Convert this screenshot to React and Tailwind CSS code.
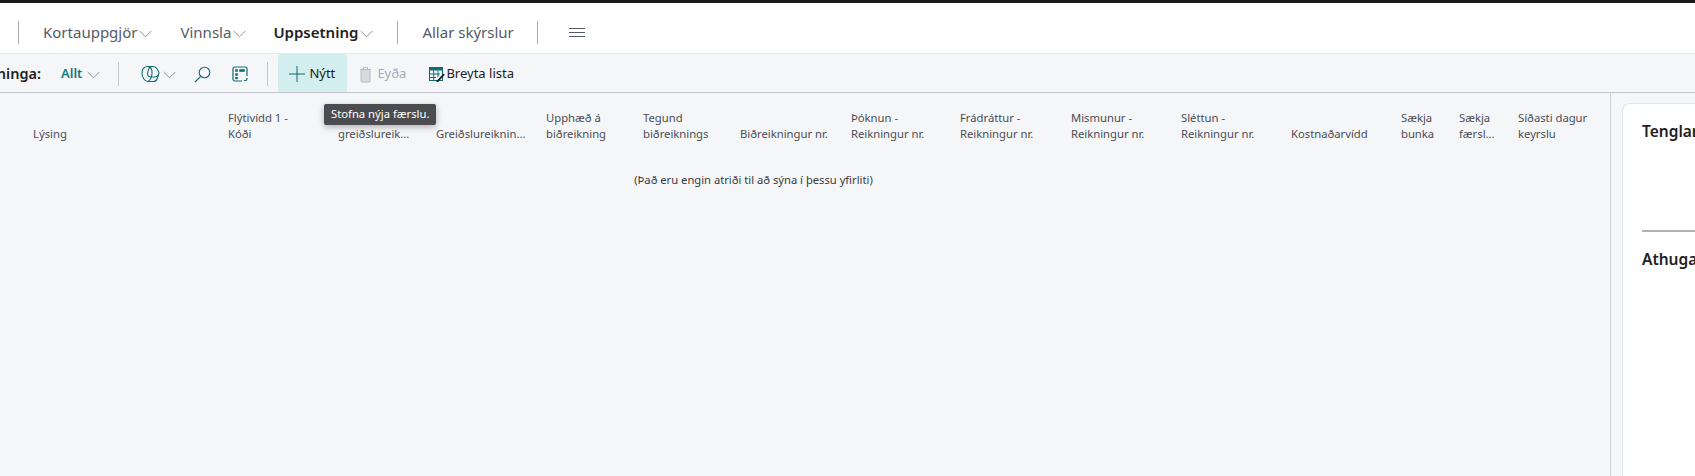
function Chev({ className = "" }) {
  return (
    <svg width="13" height="8" viewBox="0 0 13 8" fill="none" className={className}>
      <path d="M0.7 1 L6.5 6.8 L12.3 1" stroke="#8a8f98" strokeWidth="1" />
    </svg>
  );
}
function Sep({ className = "" }) {
  return <div className={`w-px bg-[#a8abb2] ${className}`} />;
}
const columns = [
  { w: "w-[195px]", a: "Lýsing" },
  { w: "w-[110px]", a: "Flýtivídd 1 -", b: "Kóði" },
  { w: "w-[98px]", a: "Númer", b: "greiðslureik..." },
  { w: "w-[110px]", b: "Greiðslureiknin..." },
  { w: "w-[97px]", a: "Upphæð á", b: "biðreikning" },
  { w: "w-[97px]", a: "Tegund", b: "biðreiknings" },
  { w: "w-[111px]", b: "Biðreikningur nr." },
  { w: "w-[109px]", a: "Þóknun -", b: "Reikningur nr." },
  { w: "w-[111px]", a: "Frádráttur -", b: "Reikningur nr." },
  { w: "w-[110px]", a: "Mismunur -", b: "Reikningur nr." },
  { w: "w-[110px]", a: "Sléttun -", b: "Reikningur nr." },
  { w: "w-[110px]", b: "Kostnaðarvídd" },
  { w: "w-[58px]", a: "Sækja", b: "bunka" },
  { w: "w-[59px]", a: "Sækja", b: "færsl..." },
  { w: "w-[90px]", a: "Síðasti dagur", b: "keyrslu" },
];
export default function App() {
  return (
    <div className="w-[1695px] h-[476px] overflow-hidden bg-[#f5f6f8] font-['Noto_Sans',sans-serif] text-[#393b41] flex flex-col">
      <div className="h-[3px] bg-[#1b1a19]" />
      <nav className="h-[51px] pt-[8px] bg-white flex items-center pl-[18px] text-[15px] text-[#545a66] border-b border-[#e6e7ea]">
        <Sep className="h-[23px] mt-[1px]" />
        <div className="ml-[24px] flex items-center gap-[2px]"><span>Kortauppgjör</span><Chev className="mt-[3px]" /></div>
        <div className="ml-[28px] flex items-center gap-[2px]"><span>Vinnsla</span><Chev className="mt-[3px]" /></div>
        <div className="ml-[27px] flex items-center gap-[2px] font-semibold text-[#1f2023]"><span>Uppsetning</span><Chev className="mt-[3px]" /></div>
        <Sep className="h-[23px] ml-[24px] mt-[1px]" />
        <span className="ml-[24px]">Allar skýrslur</span>
        <Sep className="h-[23px] ml-[23px] mt-[1px]" />
        <svg width="16" height="12" viewBox="0 0 16 12" className="ml-[31px] mt-[1px]" stroke="#545a66" strokeWidth="1">
          <path d="M0 1.5H16M0 5.5H16M0 9.5H16" />
        </svg>
      </nav>
      <div className="h-[39px] pt-[2px] flex items-center border-b border-[#c3c5ca] text-[13px]">
        <div className="w-[41px] overflow-hidden flex justify-end font-semibold text-[14.5px] text-[#1f2023] whitespace-nowrap"><span>Sýninga:</span></div>
        <div className="ml-[20px] flex items-center gap-[5px] font-semibold text-[#0f7b83]"><span>Allt</span><Chev className="mt-[2px]" /></div>
        <Sep className="h-[24px] ml-[18px] bg-[#c6c8cc]" />
        <svg width="19" height="18" viewBox="0 0 19 18" fill="none" stroke="#126b73" strokeWidth="1.1" strokeLinejoin="round" className="ml-[22px]">
          <path d="M1 8 C1 4 3.5 1.8 6.5 1.5 L12 1.5 C14 1.5 15 2.3 15.8 3.5 L17.6 6.5 C18.2 7.5 18 8.3 17.6 9.5 L16 14 C15.4 15.8 14 16.5 12.5 16.5 L7 16.5 C3.5 16.5 1 12 1 8 Z" />
          <path d="M6.5 1.5 C9.5 2 11.5 4.5 11 9 C10.6 12.5 9.5 15 7 16.5" />
          <path d="M12 1.5 C9.5 1.5 7.5 3.5 6.8 7 C6.3 10 7 11.5 9 11.8 L14 12 C16 12 16.8 11 17.6 9.5" />
        </svg>
        <Chev className="ml-[3px] mt-[2px]" />
        <svg width="17" height="17" viewBox="0 0 17 17" fill="none" stroke="#126b73" strokeWidth="1.1" className="ml-[18px]">
          <circle cx="10.5" cy="6.5" r="5.3" />
          <path d="M6.7 10.3 L1 16" strokeWidth="1.2" />
        </svg>
        <svg width="16" height="16" viewBox="0 0 16 16" fill="none" stroke="#126b73" strokeWidth="1.2" className="ml-[21px]">
          <path d="M10 15H3a2 2 0 0 1-2-2V3a2 2 0 0 1 2-2h10a2 2 0 0 1 2 2v7" />
          <rect x="3.2" y="3.2" width="2.6" height="2.6" fill="#126b73" stroke="none" />
          <rect x="7.2" y="3.2" width="5.6" height="2.6" fill="#126b73" stroke="none" />
          <rect x="3.2" y="7.2" width="2.6" height="2.6" fill="#126b73" stroke="none" />
          <rect x="3.2" y="11" width="2.6" height="2.2" fill="#126b73" stroke="none" />
          <path d="M12 14.5 h1.5 a1.5 1.5 0 0 0 1.5 -1.5 v-1" />
        </svg>
        <Sep className="h-[24px] ml-[19px] bg-[#c6c8cc]" />
        <div className="ml-[10px] w-[69px] h-[38px] -mt-[2px] pt-[2px] bg-[#d3eeee] rounded-t-[3px] flex items-center pl-[11px] text-[#1f2023]">
          <svg width="16" height="16" viewBox="0 0 16 16" stroke="#126b73" strokeWidth="1"><path d="M8 0V16M0 8H16" /></svg>
          <span className="ml-[4px]">Nýtt</span>
        </div>
        <svg width="13" height="17" viewBox="0 0 13 17" fill="none" stroke="#b8bbc0" strokeWidth="1" className="ml-[12px]">
          <path d="M1 3.5H12M4.5 3.5V1.5H8.5V3.5" />
          <rect x="2" y="3.5" width="9" height="12.5" rx="1" fill="#d8dadd" />
        </svg>
        <span className="ml-[5px] text-[#a9acb2]">Eyða</span>
        <svg width="16" height="15" viewBox="0 0 16 15" fill="none" className="ml-[23px]">
          <rect x="0.5" y="0.5" width="13" height="13" fill="none" stroke="#126b73" />
          <rect x="0" y="0" width="14" height="3.5" fill="#126b73" />
          <path d="M0.5 7H11M0.5 10.5H7M4.7 3.5V14M9 3.5V10" stroke="#126b73" />
          <path d="M7.5 14 L14.5 6.5 L15.8 7.8 L9 15 H7.5Z" fill="#1b1a19" />
        </svg>
        <span className="ml-[1px] text-[#1f2023]">Breyta lista</span>
      </div>
      <div className="flex-1 flex relative">
        <div className="absolute left-[324px] top-[11px] z-10 h-[21px] px-[7px] bg-[#4b4c4f] text-white text-[11.25px] flex items-center rounded-[2px] shadow-[0_2px_6px_rgba(0,0,0,0.3)] whitespace-nowrap">Stofna nýja færslu.</div>
        <div className="w-[1611px] shrink-0 border-r border-[#d0d2d6] flex flex-col">
          <div className="flex pl-[33px] pt-[17px] text-[11.25px] leading-[16px] text-[#4a4d55]">
            {columns.map((c, i) => (
              <div key={i} className={`${c.w} shrink-0 whitespace-nowrap`}>
                <div className="h-[16px]">{c.a && c.b ? c.a : ""}</div>
                <div>{c.b || c.a}</div>
              </div>
            ))}
          </div>
          <div className="text-center text-[11.2px] leading-[16px] mt-[30px] pr-[103px] text-[#393b41]">(Það eru engin atriði til að sýna í þessu yfirliti)</div>
        </div>
        <div className="flex-1 ml-[11px] mt-[10px] bg-white rounded-tl-[8px] border-l border-t border-[#e2e3e6] pl-[19px] overflow-hidden">
          <div className="mt-[16px] font-semibold text-[15.5px] text-[#1f2023]">Tenglar</div>
          <div className="mt-[87px] h-[2px] bg-[#b0b2b7]" />
          <div className="mt-[16px] font-semibold text-[15.5px] text-[#1f2023] whitespace-nowrap">Athugasemdir</div>
        </div>
      </div>
    </div>
  );
}
